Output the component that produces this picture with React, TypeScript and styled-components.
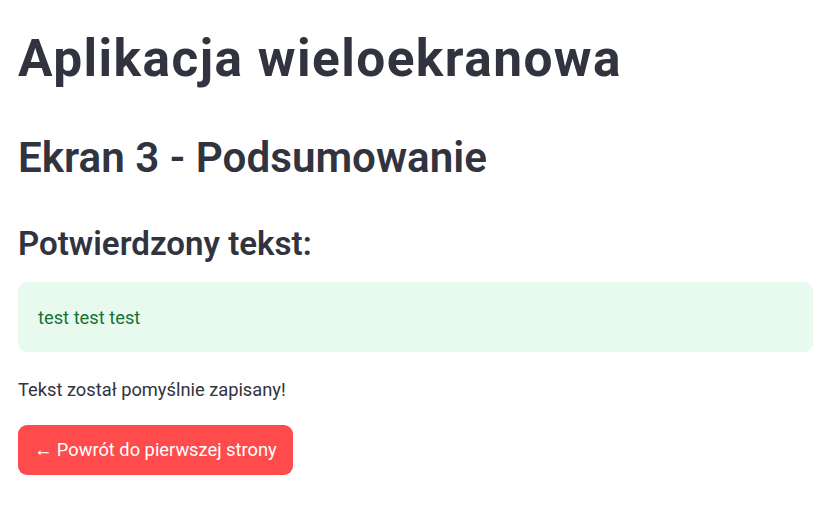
import React from "react";
import styled, { createGlobalStyle } from "styled-components";

const GlobalStyle = createGlobalStyle`
  html, body { margin: 0; padding: 0; background: #ffffff; }
  body {
    font-family: Roboto, "Noto Sans", "Liberation Sans", sans-serif;
    color: #31333f;
    -webkit-font-smoothing: antialiased;
  }
`;

const Page = styled.main`
  display: flex;
  flex-direction: column;
  align-items: stretch;
  padding: 29px 18px 0 18px;
`;

const Title = styled.h1`
  margin: 0;
  font-size: 51.4px;
  line-height: 60px;
  font-weight: 700;
  letter-spacing: 1.45px;
  color: #31333f;
`;

const Subtitle = styled.h2`
  margin: 44px 0 0 0;
  font-size: 42.2px;
  line-height: 50px;
  font-weight: 600;
  color: #31333f;
`;

const SectionTitle = styled.h3`
  margin: 41px 0 0 0;
  font-size: 33.1px;
  line-height: 40px;
  font-weight: 600;
  color: #31333f;
`;

const SuccessBox = styled.div`
  margin-top: 18px;
  box-sizing: border-box;
  height: 70px;
  padding: 23px 20px 0 20px;
  border-radius: 9px;
  background: #e8f9ee;
  color: #177233;
  font-size: 18.3px;
  line-height: 26px;
`;

const Paragraph = styled.p`
  margin: 25px 0 0 0;
  font-size: 18.3px;
  line-height: 26px;
  color: #31333f;
`;

const BackButton = styled.button`
  align-self: flex-start;
  margin-top: 22px;
  height: 50px;
  padding: 0 16px;
  border: none;
  border-radius: 9px;
  background: #ff4b4b;
  color: #ffffff;
  font-family: inherit;
  font-size: 18.3px;
  line-height: 26px;
  cursor: pointer;
`;

export default function App() {
  return (
    <>
      <GlobalStyle />
      <Page>
        <Title>Aplikacja wieloekranowa</Title>
        <Subtitle>Ekran 3 - Podsumowanie</Subtitle>
        <SectionTitle>Potwierdzony tekst:</SectionTitle>
        <SuccessBox>test test test</SuccessBox>
        <Paragraph>Tekst został pomyślnie zapisany!</Paragraph>
        <BackButton type="button">← Powrót do pierwszej strony</BackButton>
      </Page>
    </>
  );
}
